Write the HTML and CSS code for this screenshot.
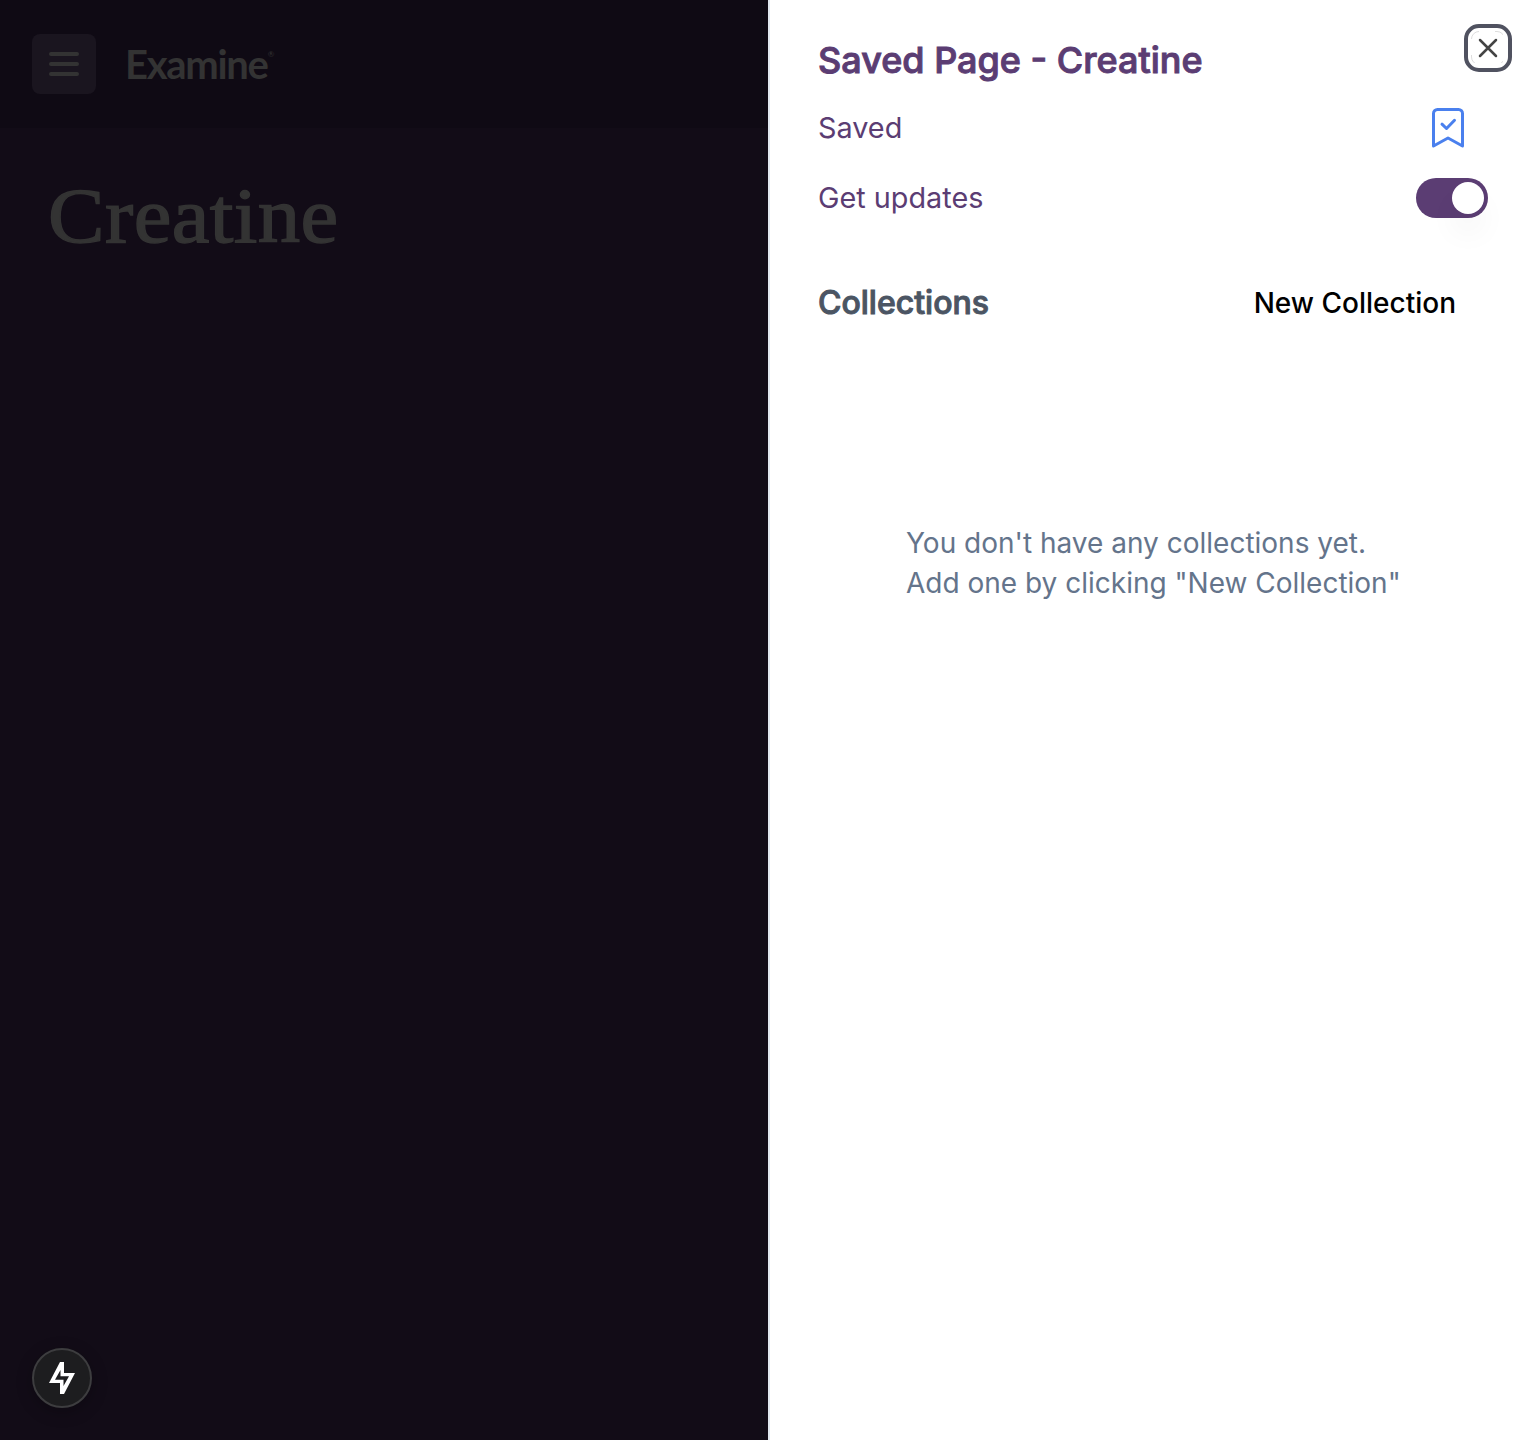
FILE: index.html
```html
<!DOCTYPE html>
<html lang="en">
<head>
<meta charset="utf-8">
<title>Creatine - Examine</title>
<link rel="stylesheet" href="styles.css">
</head>
<body>
<div class="layout">
  <main class="page">
    <header class="topbar">
      <button class="menu" aria-label="Menu">
        <svg width="32" height="28" viewBox="0 0 32 28" fill="none" stroke="currentColor" stroke-width="4" stroke-linecap="round"><path d="M3 4h26M3 14h26M3 24h26"/></svg>
      </button>
      <div class="logo"><span class="logo-name">Examine</span><span class="logo-mark">®</span></div>
    </header>
    <h1 class="page-title">Creatine</h1>
    <button class="bolt" aria-label="Developer tools">
      <svg width="32" height="36" viewBox="0 0 32 36" fill="currentColor" fill-rule="evenodd"><path d="M14 2H18V13H29L18 34H14V23H3ZM14.500 10L9 19.800H17.500V26L23 16.200H14.500Z"/></svg>
    </button>
  </main>
  <aside class="drawer">
    <h2 class="drawer-title">Saved Page - Creatine</h2>
    <div class="row row-saved">
      <span class="label">Saved</span>
      <svg class="bookmark" width="36" height="44" viewBox="0 0 36 44" fill="none" stroke="currentColor" stroke-width="3" stroke-linecap="round" stroke-linejoin="round"><path d="M3.500 40V7.500a4 4 0 0 1 4-4H28.500a4 4 0 0 1 4 4V40L18 32Z"/><path d="M12 18.200L16.500 22.500L24.500 14.300"/></svg>
    </div>
    <div class="row row-updates">
      <span class="label">Get updates</span>
      <span class="toggle"><span class="knob"></span></span>
    </div>
    <div class="collections">
      <h3 class="collections-title">Collections</h3>
      <button class="new">New Collection</button>
    </div>
    <p class="empty">You don't have any collections yet.<br>Add one by clicking "New Collection"</p>
    <button class="close" aria-label="Close">
      <svg width="24" height="24" viewBox="0 0 24 24" fill="none" stroke="currentColor" stroke-width="2.500" stroke-linecap="round"><path d="M4 4L20 20M20 4L4 20"/></svg>
    </button>
  </aside>
</div>
</body>
</html>
```
FILE: styles.css
```css
* { box-sizing: border-box; }
body { margin: 0; font-family: Inter, sans-serif; background: #fff; }
button { border: 0; padding: 0; background: none; font: inherit; }
h1, h2, h3, p { margin: 0; }
svg { display: block; }
.layout { display: grid; grid-template-columns: 768px 768px; height: 1440px; overflow: hidden; }
.page { position: relative; background: #120c17; color: #333; }
.topbar { display: flex; align-items: center; gap: 29px; height: 128px; padding: 0 32px; background: #0f0a14; }
.menu { display: grid; place-items: center; width: 64px; height: 60px; border-radius: 8px; background: #1a151f; color: #333; }
.logo { display: flex; align-items: flex-start; font-family: Lato, sans-serif; color: #333; }
.logo-name { font-size: 40px; font-weight: 700; line-height: 46px; letter-spacing: -1.300px; }
.logo-mark { margin-left: 0; font-size: 8px; line-height: 16px; padding-top: 5px; }
.page-title { width: max-content; margin: 48px 0 0 48px; font-family: "Liberation Serif", serif; font-size: 79px; line-height: 80px; font-weight: 400; color: #333; -webkit-text-stroke: 1.400px #333; letter-spacing: .400px; transform: scaleX(1.073); transform-origin: left; }
.bolt { position: absolute; left: 32px; top: 1348px; display: grid; place-items: center; width: 60px; height: 60px; border: 2px solid #3d3d3f; border-radius: 50%; background: #1d1d1f; color: #fff; box-shadow: 0 4px 16px rgba(0, 0, 0, .25); }
.drawer { position: relative; padding: 36px 48px 0; border-left: 2px solid #e2e8f0; background: #fff; color: #5b3d73; }
.drawer-title { font-size: 36px; line-height: 48px; font-weight: 500; -webkit-text-stroke: 1px #5b3d73; white-space: nowrap; }
.row { display: flex; align-items: center; justify-content: space-between; height: 44px; font-size: 28.800px; }
.label { padding-bottom: 2px; }
.row-saved { margin-top: 22px; }
.row-updates { margin-top: 26px; }
.bookmark { margin-right: 22px; color: #4a80ee; }
.toggle { display: flex; justify-content: flex-end; width: 72px; height: 40px; padding: 4px; border-radius: 20px; background: #5b3d73; }
.knob { width: 32px; height: 32px; border-radius: 50%; background: #fff; box-shadow: 0 20px 30px -1px rgba(0, 0, 0, .05); }
.collections { display: flex; align-items: center; justify-content: space-between; height: 48px; margin-top: 59px; padding-right: 32px; }
.collections-title { padding-bottom: 2px; font-size: 32px; font-weight: 500; color: #4b5563; -webkit-text-stroke: 1px #4b5563; }
.new { font-size: 28px; font-weight: 500; color: #000; }
.empty { margin: 196px 0 0 88px; font-size: 28px; line-height: 40px; color: #64748b; white-space: nowrap; }
.close { position: absolute; right: 24px; top: 24px; display: grid; place-items: center; width: 48px; height: 48px; border: 4px solid #505260; border-radius: 15px; background: #fff; color: #444; }
.close::before { content: ""; position: absolute; width: 32px; height: 32px; border-radius: 8px; border: 1px solid #ddd; clip-path: polygon(0 0, 8px 0, 8px 8px, 24px 8px, 24px 0, 32px 0, 32px 8px, 24px 8px, 24px 24px, 32px 24px, 32px 32px, 24px 32px, 24px 24px, 8px 24px, 8px 32px, 0 32px, 0 24px, 8px 24px, 8px 8px, 0 8px); }
```
